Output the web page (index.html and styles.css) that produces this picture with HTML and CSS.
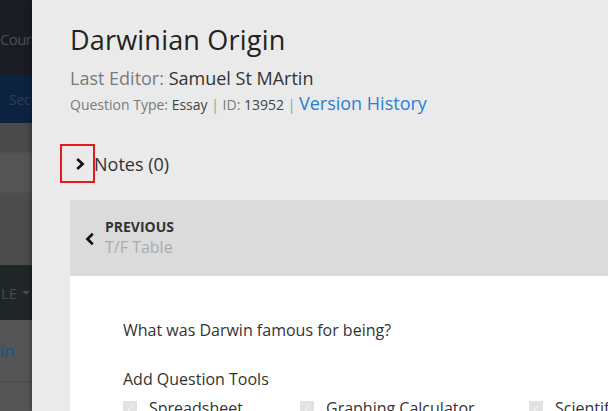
FILE: index.html
```html
<!DOCTYPE html>
<html lang="en">
<head>
    <meta charset="UTF-8">
    <meta name="viewport" content="width=device-width, initial-scale=1.0">
    <title>Darwinian Origin</title>
    <link rel="stylesheet" href="styles.css">
</head>
<body>
    <div class="app">
        <aside class="sidebar">
            <div class="side-top">Cour</div>
            <div class="side-tab">Sec</div>
            <div class="side-row r1"></div>
            <div class="side-row r2"></div>
            <div class="side-row r3"></div>
            <div class="side-drop">LE <span class="caret"></span></div>
            <div class="side-link">in</div>
            <div class="side-row r4"></div>
        </aside>

        <main class="panel">
            <header class="head">
                <h1>Darwinian Origin</h1>
                <p class="editor"><span class="muted">Last Editor:</span> Samuel St MArtin</p>
                <p class="meta">
                    <span class="muted">Question Type:</span> Essay <span class="sep">|</span>
                    <span class="muted">ID:</span> 13952 <span class="sep">|</span>
                    <a href="#" class="history">Version History</a>
                </p>
            </header>

            <div class="notes">
                <span class="toggle">
                    <svg width="10" height="14" viewBox="0 0 10 14"><path d="M2.2 2 L7.6 7 L2.2 12" fill="none" stroke="#111" stroke-width="2.6"/></svg>
                </span>
                <span class="notes-label">Notes (0)</span>
            </div>

            <div class="prev">
                <svg class="prev-icon" width="10" height="14" viewBox="0 0 10 14"><path d="M7.8 1.8 L2.4 7 L7.8 12.2" fill="none" stroke="#111" stroke-width="2.6"/></svg>
                <div>
                    <div class="prev-title">PREVIOUS</div>
                    <div class="prev-name">T/F Table</div>
                </div>
            </div>

            <section class="card">
                <p class="question">What was Darwin famous for being?</p>
                <p class="tools-title">Add Question Tools</p>
                <div class="tools">
                    <label class="tool t1"><span class="box">&#10003;</span>Spreadsheet</label>
                    <label class="tool t2"><span class="box">&#10003;</span>Graphing Calculator</label>
                    <label class="tool"><span class="box">&#10003;</span>Scientific Calculator</label>
                </div>
            </section>
        </main>
    </div>
</body>
</html>
```

FILE: styles.css
```css
body {
    margin: 0;
    font-family: "Open Sans", Arial, sans-serif;
    color: #333;
    overflow: hidden;
}

.app {
    display: flex;
    height: 411px;
    width: 608px;
    overflow: hidden;
}

/* dimmed sidebar behind the panel */
.sidebar {
    width: 32px;
    flex: none;
    background: #555;
    overflow: hidden;
    white-space: nowrap;
}

.sidebar > div {
    display: flex;
    align-items: center;
    box-sizing: border-box;
}

.side-top {
    height: 75px;
    background: #191c22;
    color: #4b4f56;
    font-size: 15px;
    letter-spacing: -0.6px;
    padding-top: 2px;
}

.side-tab {
    height: 48px;
    background: #0c2340;
    color: #2d3e57;
    font-size: 14px;
    padding-left: 9px;
    letter-spacing: -0.3px;
}

.r1 { height: 29px; background: #4a4a4a; }
.r2 { height: 40px; background: #545454; border-top: 1px solid #4f4f4f; }
.r3 { height: 73px; background: #4c4c4c; border-top: 1px solid #505050; }
.r4 { height: 31px; background: #555; border-top: 1px solid #4a4a4a; }

.side-drop {
    height: 55px;
    background: #202528;
    color: #464a4d;
    font-size: 15px;
    padding-left: 1px;
}

.caret {
    display: inline-block;
    margin-left: 5px;
    border-left: 4px solid transparent;
    border-right: 4px solid transparent;
    border-top: 4px solid #464a4d;
}

.side-link {
    height: 61px;
    color: #1f4f88;
    font-size: 17px;
}

.panel {
    flex: 1;
    background: #eaeaea;
    padding-left: 38px;
    box-shadow: -2px 0 4px rgba(0, 0, 0, 0.25);
    position: relative;
}

.head {
    padding-top: 22px;
}

h1 {
    margin: 0;
    font-weight: 400;
    font-size: 27px;
    line-height: 36px;
    color: #222;
    letter-spacing: 0.2px;
}

.editor {
    margin: 7px 0 0;
    font-size: 18px;
    line-height: 26px;
    color: #333;
}

.meta {
    margin: 1px 0 0;
    font-size: 14px;
    line-height: 22px;
    color: #444;
}

.muted {
    color: #7a7a7a;
}

.sep {
    color: #999;
}

.history {
    color: #2a7fd4;
    font-size: 18px;
    text-decoration: none;
}

.notes {
    display: flex;
    align-items: center;
    margin: 28px 0 0 -10px;
    height: 39px;
}

.toggle {
    height: 35px;
    width: 27px;
    border: 2px solid #e8161d;
    display: flex;
    align-items: center;
    justify-content: center;
    padding-left: 4px;
}

.notes-label {
    font-size: 18px;
    color: #333;
    margin-left: -1px;
}

.prev {
    margin-top: 17px;
    height: 76px;
    background: #dbdbdb;
    display: flex;
    align-items: center;
    padding-left: 15px;
}

.prev-icon {
    margin-right: 10px;
    margin-top: 2px;
}

.prev-title {
    font-size: 14px;
    font-weight: 700;
    color: #333;
    line-height: 18px;
}

.prev-name {
    font-size: 16px;
    color: #aaa;
    line-height: 22px;
}

.card {
    background: #fff;
    height: 200px;
    padding: 42px 0 0 53px;
}

.question {
    margin: 0;
    font-size: 16px;
    line-height: 24px;
    color: #333;
}

.tools-title {
    margin: 25px 0 0;
    font-size: 16px;
    line-height: 24px;
    color: #333;
}

.tools {
    display: flex;
    margin-top: 6px;
    font-size: 16px;
    color: #333;
}

.tool {
    display: flex;
    align-items: center;
    white-space: nowrap;
}

.t1 { width: 177px; }
.t2 { width: 229px; }

.box {
    width: 14px;
    height: 14px;
    background: #e2e2e2;
    color: #f2f2f2;
    font-size: 11px;
    line-height: 14px;
    text-align: center;
    margin-right: 12px;
}
```
